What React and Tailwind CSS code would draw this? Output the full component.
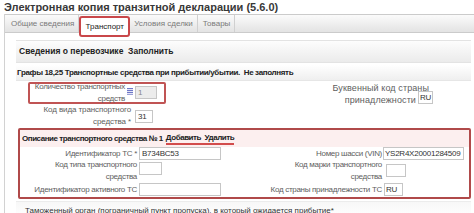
import React from "react";

function Field({ className = "", children }) {
  return (
    <div
      className={`h-[13px] shrink-0 border border-[#c6c6c6] px-[2px] text-[8px] leading-[11px] tracking-[-0.25px] text-[#333] whitespace-nowrap overflow-hidden ${className}`}
    >
      {children}
    </div>
  );
}

export default function App() {
  return (
    <div className="w-[474px] h-[213px] overflow-hidden bg-white font-['Liberation_Sans',Arial,sans-serif] text-[8px] tracking-[-0.3px] text-[#5e5e5e]">
      <div className="h-[14px] whitespace-nowrap pl-[4px] text-[11px] font-bold leading-[15px] tracking-[0px] text-[#383838]">
        Электронная копия транзитной декларации (5.6.0)
      </div>
      <div className="ml-[4px] h-[199px] border-l border-[#d2d2d2]">
        <div className="flex h-[19px] items-start whitespace-nowrap border-y border-[#cbcbcb] bg-gradient-to-b from-[#fbfbfb] to-[#e3e3e3] tracking-[0px]">
          <div className="flex h-[17px] shrink-0 items-center border-r border-[#d0d0d0] pl-[6px] pr-[4px] text-[#7a7a7a]">
            Общие сведения
          </div>
          <div className="relative z-10 mt-[1px] flex h-[21px] w-[51px] shrink-0 items-center justify-center rounded-[3px] border-2 border-[#c9474a] bg-white text-[#222]">
            Транспорт
          </div>
          <div className="flex h-[17px] shrink-0 items-center border-r border-[#d0d0d0] pl-[4px] pr-[4px] text-[#7a7a7a]">
            Условия сделки
          </div>
          <div className="flex h-[17px] shrink-0 items-center border-r border-[#d0d0d0] pl-[5px] pr-[4px] text-[#7a7a7a]">
            Товары
          </div>
        </div>

        <div className="pl-[11px] pr-[3px] pt-[7px]">
          <div className="flex h-[23px] items-center whitespace-nowrap border-y border-[#e3e3e3] bg-gradient-to-b from-[#fdfdfd] to-[#ebebeb] pl-[3px] text-[8.5px] font-bold tracking-[0px] text-[#222]">
            Сведения о перевозчике&nbsp;&nbsp;Заполнить
          </div>
          <div className="mt-[2px] flex h-[16px] items-center whitespace-nowrap border-b border-[#e6e6e6] bg-gradient-to-b from-[#ffffff] to-[#efefef] pl-[1px] font-bold tracking-[-0.35px] text-[#222]">
            Графы 18,25 Транспортные средства при прибытии/убытии.&nbsp;&nbsp;Не заполнять
          </div>

          <div className="mt-[1px] flex h-[46px]">
            <div className="flex w-[150px] shrink-0 flex-col">
              <div className="ml-[12px] flex h-[22px] w-[138px] items-center rounded-[2px] border-2 border-[#c05454]">
                <div className="w-[95px] shrink-0 whitespace-nowrap text-right leading-[12px]">
                  Количество транспортных
                  <br />
                  средств
                </div>
                <svg
                  className="ml-[2px] self-start mt-[4px] shrink-0"
                  width="6"
                  height="7"
                  viewBox="0 0 6 7"
                >
                  <rect x="0" y="0" width="6" height="1.2" fill="#6f78c8" />
                  <rect x="0" y="2" width="6" height="1.2" fill="#6f78c8" />
                  <rect x="0" y="4" width="6" height="1.2" fill="#6f78c8" />
                  <rect x="0" y="6" width="6" height="1" fill="#9aa0d8" />
                </svg>
                <Field className="ml-[2px] self-start mt-[2px] w-[22px] bg-[#ececec] !text-[#888]">
                  1
                </Field>
              </div>
              <div className="flex w-[137px] items-start justify-end">
                <div className="whitespace-nowrap text-right leading-[12px] tracking-[-0.1px]">
                  Код вида транспортного
                  <br />
                  средства *
                </div>
                <Field className="ml-[4px] mt-[6px] w-[18px] bg-white">31</Field>
              </div>
            </div>

            <div className="ml-auto mr-[38px] flex flex-col items-end whitespace-nowrap text-[9px] leading-[12px] tracking-[0.1px]">
              <div className="mr-[4px]">Буквенный код страны</div>
              <div className="flex items-start">
                <span>принадлежности</span>
                <Field className="ml-[2px] -mt-[3px] w-[15px] bg-white !px-[1px]">RU</Field>
              </div>
            </div>
          </div>

          <div className="ml-[2px] h-[71px] rounded-[2px] border-2 border-[#b04a4a]">
            <div className="flex h-[17px] items-center whitespace-nowrap bg-[#fcefef] pl-[2px] font-bold tracking-[-0.45px] text-[#222]">
              <span>Описание транспортного средства № 1</span>
              <span className="ml-[3px] border-b-2 border-[#d24c4c] leading-[11px]">
                Добавить&nbsp;&nbsp;Удалить
              </span>
            </div>

            <div className="flex h-[13px] items-center whitespace-nowrap">
              <div className="flex w-[245px] shrink-0 items-center">
                <div className="w-[117px] shrink-0 text-right">Идентификатор ТС *</div>
                <Field className="ml-[2px] w-[82px] bg-white">B734BC53</Field>
              </div>
              <div className="flex items-center">
                <div className="w-[117px] shrink-0 text-right">Номер шасси (VIN)</div>
                <Field className="ml-[1px] w-[81px] bg-white !px-[1px]">YS2R4X20001284509</Field>
              </div>
            </div>

            <div className="-mt-[1px] flex h-[24px] items-start whitespace-nowrap">
              <div className="flex w-[245px] shrink-0 items-start">
                <div className="w-[117px] shrink-0 text-right leading-[12px]">
                  Код типа транспортного
                  <br />
                  средства
                </div>
                <Field className="ml-[2px] mt-[3px] w-[23px] bg-white"></Field>
              </div>
              <div className="flex items-start">
                <div className="w-[117px] shrink-0 text-right leading-[12px]">
                  Код марки транспортного
                  <br />
                  средства
                </div>
                <Field className="ml-[4px] mt-[5px] w-[20px] bg-white"></Field>
              </div>
            </div>

            <div className="flex h-[13px] items-center whitespace-nowrap">
              <div className="flex w-[245px] shrink-0 items-center">
                <div className="w-[117px] shrink-0 text-right">Идентификатор активного ТС</div>
                <Field className="ml-[2px] w-[82px] bg-white"></Field>
              </div>
              <div className="flex items-center">
                <div className="w-[117px] shrink-0 text-right">Код страны принадлежности ТС</div>
                <Field className="ml-[2px] w-[19px] bg-white !px-[1px]">RU</Field>
              </div>
            </div>
          </div>

          <div className="mt-[2px] border-t border-[#ececec] bg-gradient-to-b from-[#f7f7f7] to-white pl-[9px] pt-[3px] whitespace-nowrap leading-[12px] tracking-[0px] text-[#333]">
            Таможенный орган (пограничный пункт пропуска), в который ожидается прибытие*
          </div>
        </div>
      </div>
    </div>
  );
}
